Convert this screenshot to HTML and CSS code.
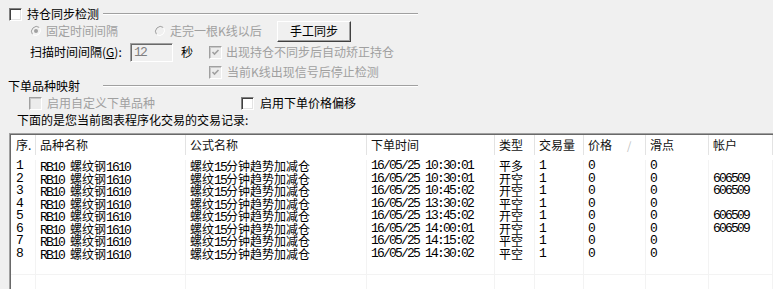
FILE: index.html
```html
<!DOCTYPE html>
<html>
<head>
<meta charset="utf-8">
<link rel="stylesheet" href="styles.css">
</head>
<body>
<div class="form">
  <div class="row r1">
    <span class="cb"></span><span class="lbl gap5">持仓同步检测</span><span class="etch e1"></span>
  </div>
  <div class="row r2">
    <span class="radio"><svg width="12" height="12" viewBox="0 0 12 12"><circle cx="6" cy="6" r="5" fill="#f0f0f0"/><path d="M2.5 9.5A5 5 0 0 1 9.5 2.5" fill="none" stroke="#a0a0a0"/><path d="M9.5 2.5A5 5 0 0 1 2.5 9.5" fill="none" stroke="#fff"/><circle cx="6" cy="6" r="2" fill="#a0a0a0"/></svg></span>
    <span class="dis opt1">固定时间间隔</span>
    <span class="radio"><svg width="12" height="12" viewBox="0 0 12 12"><circle cx="6" cy="6" r="5" fill="#f0f0f0"/><path d="M2.5 9.5A5 5 0 0 1 9.5 2.5" fill="none" stroke="#a0a0a0"/><path d="M9.5 2.5A5 5 0 0 1 2.5 9.5" fill="none" stroke="#fff"/></svg></span>
    <span class="dis opt2">走完一根K线以后</span>
    <span class="btn">手工同步</span>
  </div>
  <div class="row r3">
    <span class="scan">扫描时间间隔(<u>G</u>):</span>
    <span class="inp">12</span>
    <span class="sec">秒</span>
    <span class="cb dis"><svg width="11" height="11" viewBox="0 0 11 11"><path d="M2.5 5 L4.5 7 L8.5 3" fill="none" stroke="#a0a0a0" stroke-width="1.6"/></svg></span>
    <span class="dis gap4">出现持仓不同步后自动矫正持仓</span>
  </div>
  <div class="row r4">
    <span class="cb dis"><svg width="11" height="11" viewBox="0 0 11 11"><path d="M2.5 5 L4.5 7 L8.5 3" fill="none" stroke="#a0a0a0" stroke-width="1.6"/></svg></span>
    <span class="dis gap5">当前K线出现信号后停止检测</span>
  </div>
  <div class="row r5">
    <span class="lbl">下单品种映射</span><span class="etch e2"></span>
  </div>
  <div class="row r6">
    <span class="cb dis"></span><span class="dis gap5 opt3">启用自定义下单品种</span>
    <span class="cb"></span><span class="gap6">启用下单价格偏移</span>
  </div>
  <div class="row r7">下面的是您当前图表程序化交易的交易记录:</div>
</div>

<div class="list">
  <div class="grid head">
    <div class="c first">序.</div>
    <div class="c">品种名称</div>
    <div class="c">公式名称</div>
    <div class="c">下单时间</div>
    <div class="c">类型</div>
    <div class="c">交易量</div>
    <div class="c">价格<span class="sort">/</span></div>
    <div class="c">滑点</div>
    <div class="c">帐户</div>
  </div>
  <div class="body">
    <div class="grid rowd"><div class="c first m">1</div><div class="c"><span class="m">RB10 </span>螺纹钢<span class="m">1610</span></div><div class="c">螺纹<span class="m">15</span>分钟趋势加减仓</div><div class="c m">16/05/25 10:30:01</div><div class="c">平多</div><div class="c m">1</div><div class="c m">0</div><div class="c m">0</div><div class="c m"></div></div>
    <div class="grid rowd"><div class="c first m">2</div><div class="c"><span class="m">RB10 </span>螺纹钢<span class="m">1610</span></div><div class="c">螺纹<span class="m">15</span>分钟趋势加减仓</div><div class="c m">16/05/25 10:30:01</div><div class="c">开空</div><div class="c m">1</div><div class="c m">0</div><div class="c m">0</div><div class="c m">606509</div></div>
    <div class="grid rowd"><div class="c first m">3</div><div class="c"><span class="m">RB10 </span>螺纹钢<span class="m">1610</span></div><div class="c">螺纹<span class="m">15</span>分钟趋势加减仓</div><div class="c m">16/05/25 10:45:02</div><div class="c">开空</div><div class="c m">1</div><div class="c m">0</div><div class="c m">0</div><div class="c m">606509</div></div>
    <div class="grid rowd"><div class="c first m">4</div><div class="c"><span class="m">RB10 </span>螺纹钢<span class="m">1610</span></div><div class="c">螺纹<span class="m">15</span>分钟趋势加减仓</div><div class="c m">16/05/25 13:30:02</div><div class="c">平空</div><div class="c m">1</div><div class="c m">0</div><div class="c m">0</div><div class="c m"></div></div>
    <div class="grid rowd"><div class="c first m">5</div><div class="c"><span class="m">RB10 </span>螺纹钢<span class="m">1610</span></div><div class="c">螺纹<span class="m">15</span>分钟趋势加减仓</div><div class="c m">16/05/25 13:45:02</div><div class="c">开空</div><div class="c m">1</div><div class="c m">0</div><div class="c m">0</div><div class="c m">606509</div></div>
    <div class="grid rowd"><div class="c first m">6</div><div class="c"><span class="m">RB10 </span>螺纹钢<span class="m">1610</span></div><div class="c">螺纹<span class="m">15</span>分钟趋势加减仓</div><div class="c m">16/05/25 14:00:01</div><div class="c">开空</div><div class="c m">1</div><div class="c m">0</div><div class="c m">0</div><div class="c m">606509</div></div>
    <div class="grid rowd"><div class="c first m">7</div><div class="c"><span class="m">RB10 </span>螺纹钢<span class="m">1610</span></div><div class="c">螺纹<span class="m">15</span>分钟趋势加减仓</div><div class="c m">16/05/25 14:15:02</div><div class="c">平空</div><div class="c m">1</div><div class="c m">0</div><div class="c m">0</div><div class="c m"></div></div>
    <div class="grid rowd"><div class="c first m">8</div><div class="c"><span class="m">RB10 </span>螺纹钢<span class="m">1610</span></div><div class="c">螺纹<span class="m">15</span>分钟趋势加减仓</div><div class="c m">16/05/25 14:30:02</div><div class="c">平空</div><div class="c m">1</div><div class="c m">0</div><div class="c m">0</div><div class="c m"></div></div>
    <div class="grid filler"><div class="c"></div><div class="c"></div><div class="c"></div><div class="c"></div><div class="c"></div><div class="c"></div><div class="c"></div><div class="c"></div><div class="c"></div></div>
    <div class="grid filler2"><div class="c"></div><div class="c"></div><div class="c"></div><div class="c"></div><div class="c"></div><div class="c"></div><div class="c"></div><div class="c"></div><div class="c"></div></div>
  </div>
</div>
</body>
</html>
```

FILE: styles.css
```css
html, body {
  margin: 0;
  padding: 0;
}
body {
  width: 773px;
  height: 289px;
  overflow: hidden;
  background: #f0f0f0;
  font-family: "Noto Sans CJK SC", "Noto Sans", sans-serif;
  font-size: 12px;
  color: #000;
}
.form {
  width: 418px;
  padding-top: 7px;
}
.row {
  display: flex;
  align-items: center;
  height: 14px;
  line-height: 14px;
  white-space: nowrap;
}
.r1 { padding-left: 9px; }
.r2 { height: 20px; padding-left: 30px; }
.r3 { height: 20px; margin-top: 1px; padding-left: 30px; }
.r4 { margin-top: 3px; padding-left: 209px; }
.r5 { padding-left: 8px; }
.r6 { margin-top: 3px; padding-left: 29px; }
.r7 { margin-top: 3px; padding-left: 17px; }

.gap4 { margin-left: 4px; }
.gap5 { margin-left: 5px; }
.gap6 { margin-left: 6px; }

.dis { color: #a0a0a0; }

.etch {
  flex: 1;
  height: 0;
  border-top: 1px solid #a0a0a0;
  border-bottom: 1px solid #ffffff;
}
.e1 { margin-left: 4px; }
.e2 { margin-left: 23px; }

.cb {
  flex: none;
  width: 13px;
  height: 13px;
  box-sizing: border-box;
  background: #fff;
  border: 1px solid;
  border-color: #808080 #ffffff #ffffff #808080;
  box-shadow: inset 1px 1px #404040, inset -1px -1px #e3e3e3;
  display: flex;
  align-items: center;
  justify-content: center;
}
.cb.dis {
  background: #ececec;
  border-color: #a0a0a0 #ffffff #ffffff #a0a0a0;
  box-shadow: inset 1px 1px #c8c8c8;
}
.cb svg { display: block; }

.radio {
  flex: none;
  width: 12px;
  height: 12px;
}
.radio svg { display: block; }
.opt1 { margin-left: 4px; width: 72px; }
.opt2 { margin-left: 4px; width: 107px; }
.r2 .radio + .opt1 + .radio { margin-left: 36px; }

.btn {
  flex: none;
  width: 74px;
  height: 21px;
  box-sizing: border-box;
  border: 1px solid;
  border-color: #ffffff #404040 #404040 #ffffff;
  box-shadow: inset -1px -1px #a0a0a0;
  background: #f0f0f0;
  display: flex;
  align-items: center;
  justify-content: center;
  line-height: 14px;
}

.scan { width: 100px; }
.inp {
  flex: none;
  width: 43px;
  height: 19px;
  box-sizing: border-box;
  border: 1px solid;
  border-color: #a0a0a0 #ffffff #ffffff #a0a0a0;
  box-shadow: inset 1px 1px #696969;
  background: #f0f0f0;
  color: #808080;
  padding-left: 3px;
  line-height: 17px;
  font-family: "Liberation Mono", monospace;
  font-size: 13px;
  letter-spacing: -1.8px;
}
.sec { margin-left: 8px; }
.r3 .cb { margin-left: 16px; }
.opt3 { width: 194px; }

.list {
  margin-top: 6px;
  margin-left: 9px;
  width: 764px;
  height: 170px;
  overflow: hidden;
  box-sizing: border-box;
  border-top: 1px solid #a0a0a0;
  border-left: 1px solid #a0a0a0;
  box-shadow: inset 1px 1px #696969;
  background: #fff;
  padding: 1px 0 0 1px;
  display: flex;
  flex-direction: column;
}
.grid {
  display: grid;
  grid-template-columns: 25px 150px 181px 128px 40px 49px 62px 63px 64px;
}
.c {
  box-sizing: border-box;
  padding-left: 4px;
  border-right: 1px solid #ececec;
  white-space: nowrap;
  overflow: hidden;
}
.c.first { padding-left: 5px; }
.head {
  height: 20px;
  line-height: 20px;
  color: #111;
}
.head .c { border-right-color: #e3e3e3; }
.sort {
  color: #c0c0c0;
  margin-left: 15px;
  font-size: 11px;
}
.body {
  padding-top: 5px;
  display: flex;
  flex-direction: column;
}
.rowd {
  height: 12.57px;
  line-height: 12.57px;
}
.rowd .c { border-right-color: #f3f3f3; overflow: visible; }
.m {
  font-family: "Liberation Mono", monospace;
  font-size: 13px;
  letter-spacing: -1.8px;
}
.filler { height: 14px; }
.filler .c { border-right-color: #f3f3f3; border-bottom: 1px solid #f3f3f3; }
.filler2 { height: 20px; }
.filler2 .c { border-right-color: #f3f3f3; }
```
